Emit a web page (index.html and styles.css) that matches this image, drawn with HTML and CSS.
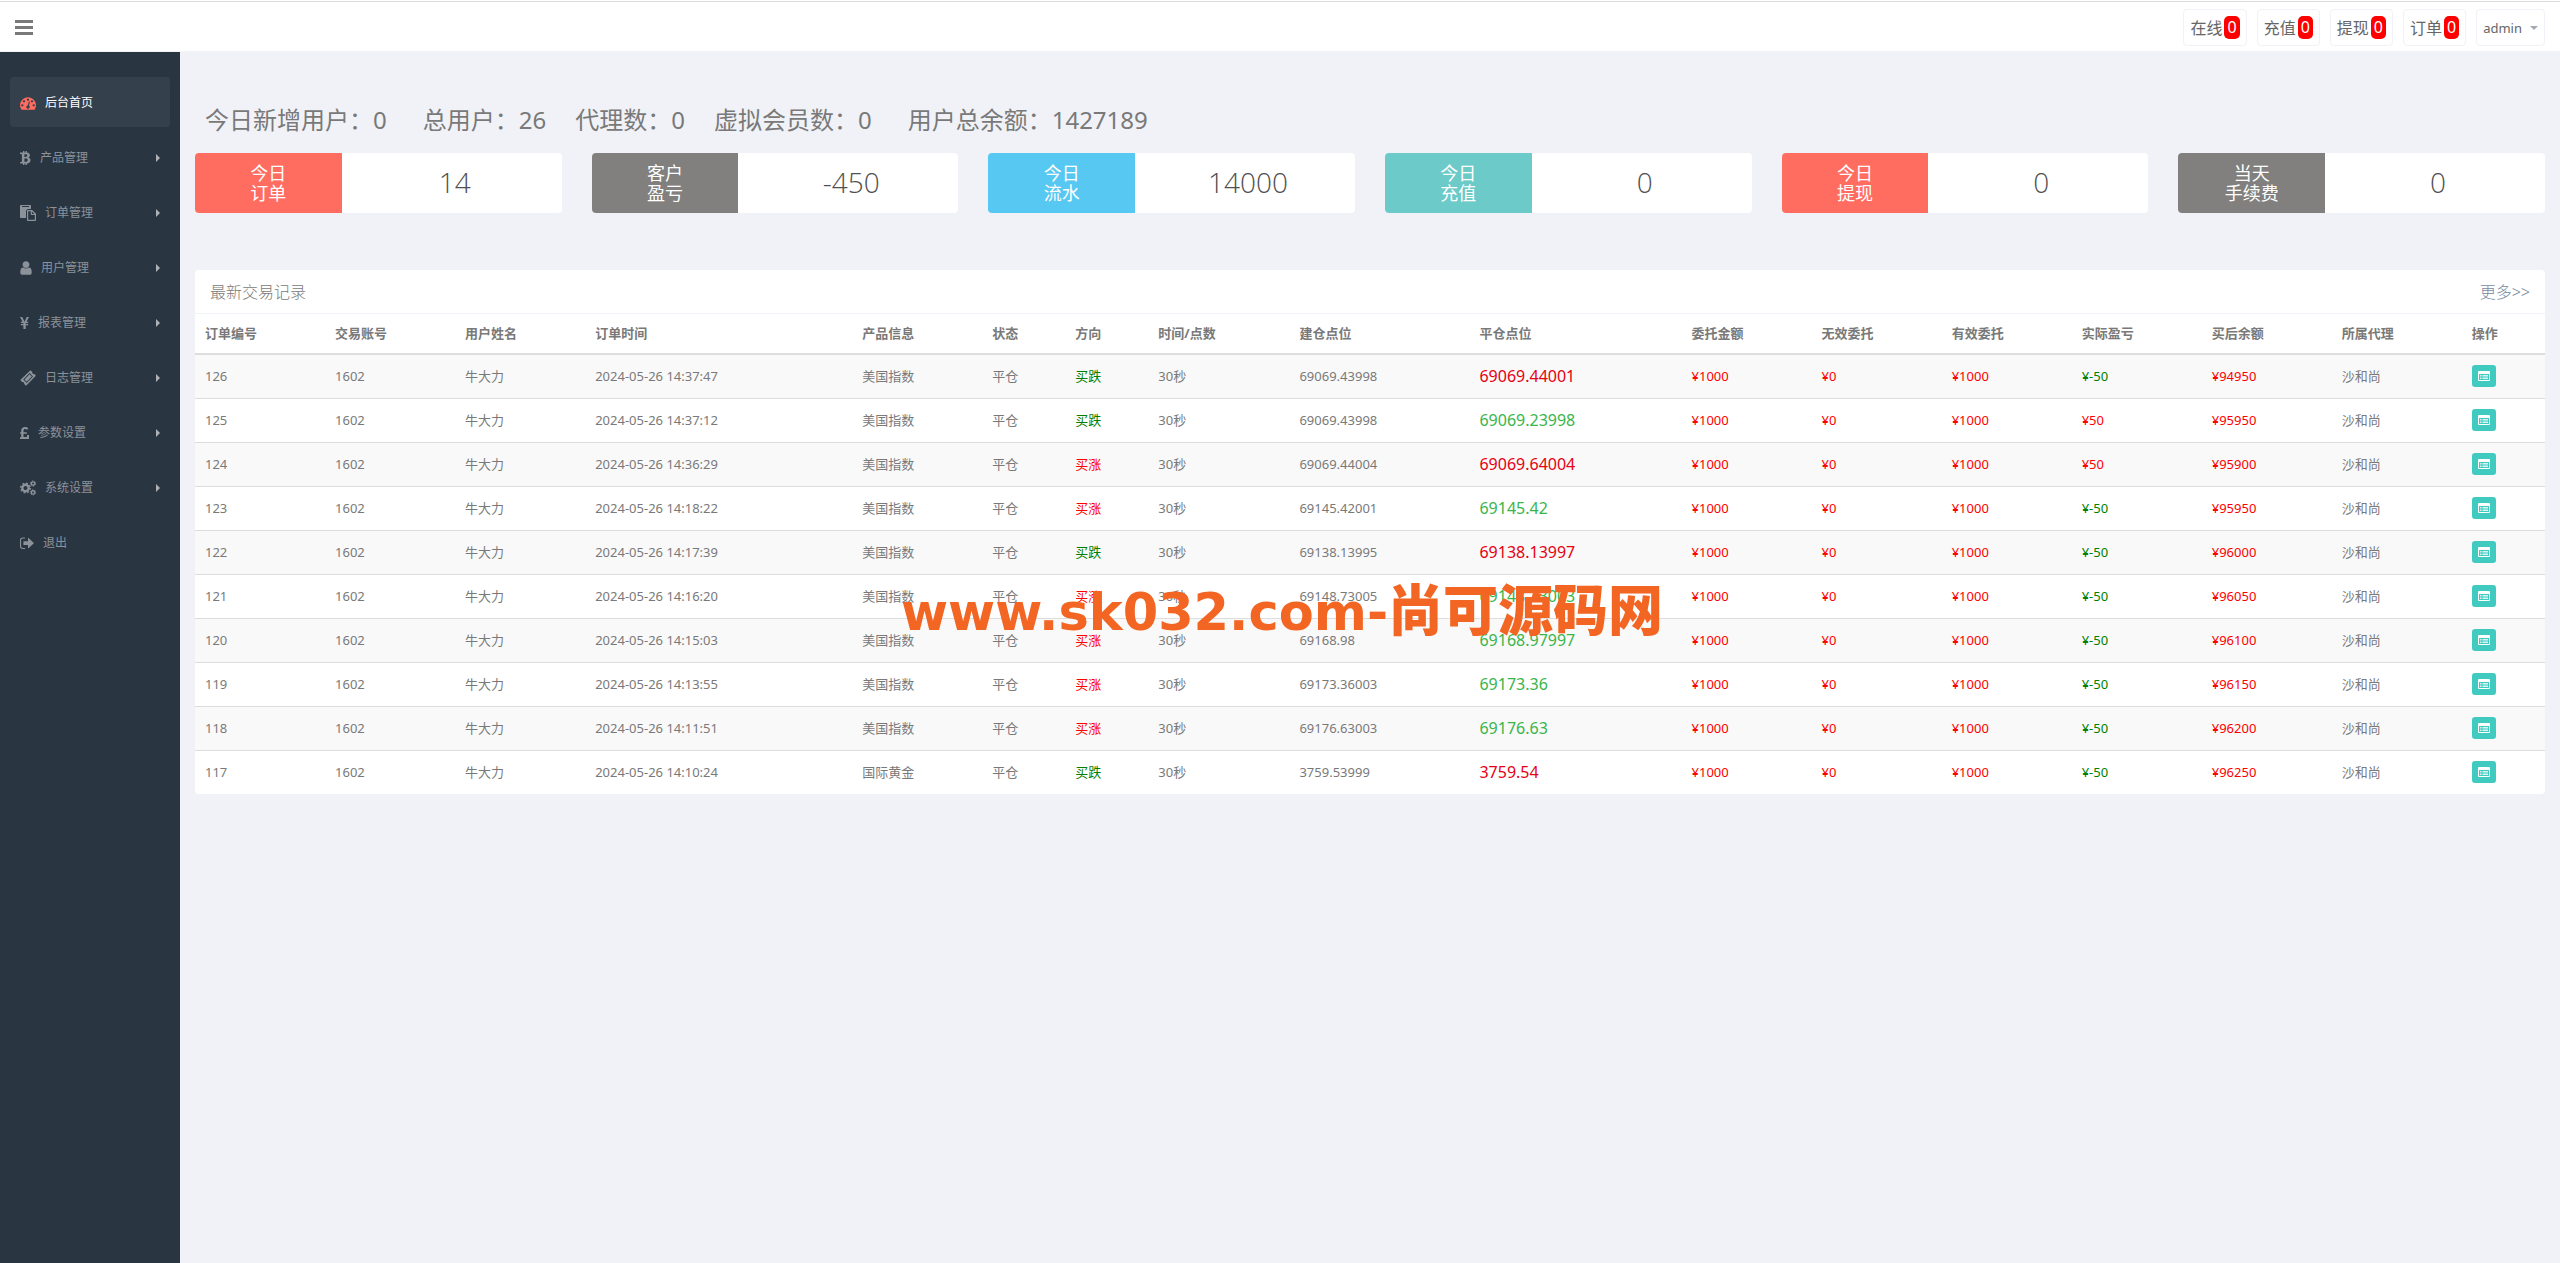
FILE: index.html
```html
<!DOCTYPE html>
<html lang="zh-CN">
<head>
<meta charset="utf-8">
<meta name="viewport" content="width=device-width, initial-scale=1">
<title>后台首页</title>
<link rel="stylesheet" href="styles.css">
</head>
<body>
<svg class="sprite" aria-hidden="true">
  <symbol id="i-list" viewBox="0 0 12 12"><path fill="currentColor" fill-rule="evenodd" d="M1 1h10a1 1 0 0 1 1 1v8a1 1 0 0 1-1 1H1a1 1 0 0 1-1-1V2a1 1 0 0 1 1-1zm0 3v6h10V4z"/><path fill="currentColor" opacity=".8" d="M2 5h1.500v1H2zM4.500 5H10v1H4.500zM2 6.500h1.500v1H2zM4.500 6.500H10v1H4.500zM2 8h1.500v1H2zM4.500 8H10v1H4.500z"/></symbol>
</svg>

<header class="topbar">
  <button class="toggle" type="button" aria-label="菜单"><span class="bar"></span><span class="bar"></span><span class="bar"></span></button>
  <nav class="top-links">
    <a class="chip" href="#">在线<span class="count">0</span></a>
    <a class="chip" href="#">充值<span class="count">0</span></a>
    <a class="chip" href="#">提现<span class="count">0</span></a>
    <a class="chip" href="#">订单<span class="count">0</span></a>
    <button class="chip account" type="button">admin<span class="caret"></span></button>
  </nav>
</header>

<div class="layout">
  <aside class="sidebar">
    <nav class="menu">
      <a class="item active" href="#"><svg class="icon" width="16" height="16" viewBox="0 0 1792 1792"><path d="M384 1152q0-53-37.500-90.500t-90.500-37.500-90.500 37.500-37.500 90.500 37.500 90.500 90.500 37.500 90.500-37.500 37.500-90.500zm192-448q0-53-37.500-90.500t-90.500-37.500-90.500 37.500-37.500 90.500 37.500 90.500 90.500 37.500 90.500-37.500 37.500-90.500zm428 481l101-382q6-26-7.500-48.500t-38.500-29.500-48 6.500-30 39.500l-101 382q-60 5-107 43.500t-63 98.500q-20 77 20 146t117 89 146-20 89-117q16-60-6-117t-72-91zm660-33q0-53-37.500-90.500t-90.500-37.500-90.500 37.500-37.500 90.500 37.500 90.500 90.500 37.500 90.500-37.500 37.500-90.500zm-640-640q0-53-37.500-90.500t-90.500-37.500-90.500 37.500-37.500 90.500 37.500 90.500 90.500 37.500 90.500-37.500 37.500-90.500zm448 192q0-53-37.500-90.500t-90.500-37.500-90.500 37.500-37.500 90.500 37.500 90.500 90.500 37.500 90.500-37.500 37.500-90.500zm320 448q0 261-141 483-19 29-54 29h-1402q-35 0-54-29-141-221-141-483 0-182 71-348t191-286 286-191 348-71 348 71 286 191 191 286 71 348z"/></svg>后台首页</a>
      <a class="item" href="#"><svg class="icon" width="11" height="16" viewBox="0 0 11 16"><path fill-rule="evenodd" d="M0 2.500h3V1h1.400v1.400h1.100V1h1.400v1.600c1.900.3 3 1.200 3 2.700 0 1-.5 1.800-1.500 2.300 1.400.4 2.100 1.300 2.100 2.600 0 2-1.300 3-3.600 3.200V15H5.500v-1.500H4.400V15H3v-1.500H0l.4-1.600h.8c.5 0 .7-.2.700-.7V4.800c0-.5-.3-.8-.8-.8H0zm4.400 1.700v2.800h.8c1.400 0 2.100-.5 2.100-1.400S6.600 4.200 5.200 4.200zm0 4.400v3.200h1c1.400 0 2.200-.5 2.200-1.600S7.600 8.600 6.200 8.600z"/></svg>产品管理<span class="arrow"></span></a>
      <a class="item" href="#"><svg class="icon" width="16" height="16" viewBox="0 0 16 16"><path fill-rule="evenodd" d="M.8 0h9.400c.5 0 .8.300.8.800V4H8.500C7 4 6 5 6 6.500V13H.8a.8.800 0 0 1-.8-.8V.8C0 .3.300 0 .8 0zM2 1v1h7V1zM7.800 5h4.400L16 8.700v6.500c0 .5-.3.800-.8.800H7.800a.8.800 0 0 1-.8-.8V5.800c0-.5.300-.8.800-.8zm.4 1.200v8.600h6.600V10h-3.300a.8.800 0 0 1-.8-.8v-3zm3.700.4v2.300h2.300z"/></svg>订单管理<span class="arrow"></span></a>
      <a class="item" href="#"><svg class="icon" width="12" height="16" viewBox="256 0 1280 1792"><path d="M1536 1399q0 109-62.500 187t-150.500 78h-854q-88 0-150.500-78t-62.500-187q0-85 8.500-160.500t31.500-152 58.500-131 94-89 134.500-34.500q131 128 313 128t313-128q76 0 134.500 34.500t94 89 58.500 131 31.500 152 8.500 160.500zm-256-887q0 159-112.500 271.500t-271.500 112.500-271.500-112.500-112.500-271.500 112.500-271.500 271.500-112.500 271.500 112.500 112.500 271.500z"/></svg>用户管理<span class="arrow"></span></a>
      <a class="item" href="#"><svg class="icon" width="9" height="16" viewBox="0 0 9 16"><path d="M0 2h2.300l1.900 4 .3 1 .4-1L6.700 2H9L6.500 6.800H8.200v1.200H5.700v1.100h2.500v1.200H5.700V14H3.400v-3.700H.9V9.100h2.500V8H.9V6.800h1.700z"/></svg>报表管理<span class="arrow"></span></a>
      <a class="item" href="#"><svg class="icon" width="16" height="16" viewBox="0 0 16 16"><path fill-rule="evenodd" d="M9.900.7a.9.900 0 0 1 1.200 0l1.200 1.200a1.700 1.700 0 0 0 2.100 2.100l1 1.100a.9.900 0 0 1 0 1.200l-8.800 9a.9.900 0 0 1-1.200 0l-1.200-1.200a1.700 1.700 0 0 0-2.100-2.100L.8 10.700a.9.900 0 0 1 0-1.200zM9.600 3 3.300 9.400l3.400 3.500 6.300-6.400zm0 1.200 2.300 2.300-5.200 5.200-2.200-2.300z"/></svg>日志管理<span class="arrow"></span></a>
      <a class="item" href="#"><svg class="icon" width="9" height="16" viewBox="0 0 9 16"><path d="M9 10v4H0v-1.800h1.200V8.800H.1V7.200h1.100V5.400C1.200 3.300 2.800 2 5 2c1.300 0 2.500.5 3.400 1.300L7.200 4.800C6.600 4.300 5.900 4 5.200 4c-1 0-1.700.6-1.700 1.500v1.700h3.300v1.600H3.500v3.300H7V10z"/></svg>参数设置<span class="arrow"></span></a>
      <a class="item" href="#"><svg class="icon" width="16" height="16" viewBox="0 0 16 16"><circle cx="5.500" cy="8" r="3.200" fill="none" stroke="currentColor" stroke-width="2.400"/><circle cx="5.500" cy="8" r="4.800" fill="none" stroke="currentColor" stroke-width="1.400" stroke-dasharray="1.880"/><circle cx="13" cy="3.600" r="1.700" fill="none" stroke="currentColor" stroke-width="1.400"/><circle cx="13" cy="3.600" r="2.600" fill="none" stroke="currentColor" stroke-width="1" stroke-dasharray="1.360"/><circle cx="13" cy="12.400" r="1.700" fill="none" stroke="currentColor" stroke-width="1.400"/><circle cx="13" cy="12.400" r="2.600" fill="none" stroke="currentColor" stroke-width="1" stroke-dasharray="1.360"/></svg>系统设置<span class="arrow"></span></a>
      <a class="item" href="#"><svg class="icon" width="14" height="16" viewBox="0 0 14 16"><path d="M5 13.500H2.700A2.200 2.200 0 0 1 .5 11.300V5.200A2.200 2.200 0 0 1 2.700 3H5" fill="none" stroke="currentColor" stroke-width="1.200"/><path d="M4 6.200h4V3.500c0-.4.400-.6.800-.3l4.800 4.500c.2.300.2.500 0 .8l-4.800 4.500c-.4.300-.8.100-.8-.3V10H4a.6.600 0 0 1-.6-.6V6.800c0-.4.200-.6.600-.6z"/></svg>退出</a>
    </nav>
  </aside>

  <main class="content">
    <p class="totals"><span class="total wide">今日新增用户：0</span><span class="total">总用户：26</span><span class="total">代理数：0</span><span class="total wide">虚拟会员数：0</span><span class="total">用户总余额：1427189</span></p>

    <section class="cards">
      <div class="card"><div class="label red">今日<br>订单</div><div class="value">14</div></div>
      <div class="card"><div class="label gray">客户<br>盈亏</div><div class="value">-450</div></div>
      <div class="card"><div class="label blue">今日<br>流水</div><div class="value">14000</div></div>
      <div class="card"><div class="label teal">今日<br>充值</div><div class="value">0</div></div>
      <div class="card"><div class="label red">今日<br>提现</div><div class="value">0</div></div>
      <div class="card"><div class="label gray">当天<br>手续费</div><div class="value">0</div></div>
    </section>

    <section class="panel">
      <div class="panel-head"><h2 class="panel-title">最新交易记录</h2><a class="more" href="#">更多&gt;&gt;</a></div>
      <table class="orders">
        <colgroup><col class="w130"><col class="w130"><col class="w130"><col class="w267"><col class="w130"><col class="w83"><col class="w83"><col class="w141"><col class="w180"><col class="w212"><col class="w130"><col class="w130"><col class="w130"><col class="w130"><col class="w130"><col class="w130"><col class="w83"></colgroup>
        <thead><tr><th>订单编号</th><th>交易账号</th><th>用户姓名</th><th>订单时间</th><th>产品信息</th><th>状态</th><th>方向</th><th>时间/点数</th><th>建仓点位</th><th>平仓点位</th><th>委托金额</th><th>无效委托</th><th>有效委托</th><th>实际盈亏</th><th>买后余额</th><th>所属代理</th><th>操作</th></tr></thead>
        <tbody>
          <tr><td>126</td><td>1602</td><td>牛大力</td><td>2024-05-26 14:37:47</td><td>美国指数</td><td>平仓</td><td class="down">买跌</td><td>30秒</td><td>69069.43998</td><td class="close rise">69069.44001</td><td class="up">¥1000</td><td class="up">¥0</td><td class="up">¥1000</td><td class="down">¥-50</td><td class="up">¥94950</td><td>沙和尚</td><td><button class="view" type="button" aria-label="查看"><svg width="12" height="12"><use href="#i-list"/></svg></button></td></tr>
          <tr><td>125</td><td>1602</td><td>牛大力</td><td>2024-05-26 14:37:12</td><td>美国指数</td><td>平仓</td><td class="down">买跌</td><td>30秒</td><td>69069.43998</td><td class="close fall">69069.23998</td><td class="up">¥1000</td><td class="up">¥0</td><td class="up">¥1000</td><td class="up">¥50</td><td class="up">¥95950</td><td>沙和尚</td><td><button class="view" type="button" aria-label="查看"><svg width="12" height="12"><use href="#i-list"/></svg></button></td></tr>
          <tr><td>124</td><td>1602</td><td>牛大力</td><td>2024-05-26 14:36:29</td><td>美国指数</td><td>平仓</td><td class="up">买涨</td><td>30秒</td><td>69069.44004</td><td class="close rise">69069.64004</td><td class="up">¥1000</td><td class="up">¥0</td><td class="up">¥1000</td><td class="up">¥50</td><td class="up">¥95900</td><td>沙和尚</td><td><button class="view" type="button" aria-label="查看"><svg width="12" height="12"><use href="#i-list"/></svg></button></td></tr>
          <tr><td>123</td><td>1602</td><td>牛大力</td><td>2024-05-26 14:18:22</td><td>美国指数</td><td>平仓</td><td class="up">买涨</td><td>30秒</td><td>69145.42001</td><td class="close fall">69145.42</td><td class="up">¥1000</td><td class="up">¥0</td><td class="up">¥1000</td><td class="down">¥-50</td><td class="up">¥95950</td><td>沙和尚</td><td><button class="view" type="button" aria-label="查看"><svg width="12" height="12"><use href="#i-list"/></svg></button></td></tr>
          <tr><td>122</td><td>1602</td><td>牛大力</td><td>2024-05-26 14:17:39</td><td>美国指数</td><td>平仓</td><td class="down">买跌</td><td>30秒</td><td>69138.13995</td><td class="close rise">69138.13997</td><td class="up">¥1000</td><td class="up">¥0</td><td class="up">¥1000</td><td class="down">¥-50</td><td class="up">¥96000</td><td>沙和尚</td><td><button class="view" type="button" aria-label="查看"><svg width="12" height="12"><use href="#i-list"/></svg></button></td></tr>
          <tr><td>121</td><td>1602</td><td>牛大力</td><td>2024-05-26 14:16:20</td><td>美国指数</td><td>平仓</td><td class="up">买涨</td><td>30秒</td><td>69148.73005</td><td class="close fall">69148.73003</td><td class="up">¥1000</td><td class="up">¥0</td><td class="up">¥1000</td><td class="down">¥-50</td><td class="up">¥96050</td><td>沙和尚</td><td><button class="view" type="button" aria-label="查看"><svg width="12" height="12"><use href="#i-list"/></svg></button></td></tr>
          <tr><td>120</td><td>1602</td><td>牛大力</td><td>2024-05-26 14:15:03</td><td>美国指数</td><td>平仓</td><td class="up">买涨</td><td>30秒</td><td>69168.98</td><td class="close fall">69168.97997</td><td class="up">¥1000</td><td class="up">¥0</td><td class="up">¥1000</td><td class="down">¥-50</td><td class="up">¥96100</td><td>沙和尚</td><td><button class="view" type="button" aria-label="查看"><svg width="12" height="12"><use href="#i-list"/></svg></button></td></tr>
          <tr><td>119</td><td>1602</td><td>牛大力</td><td>2024-05-26 14:13:55</td><td>美国指数</td><td>平仓</td><td class="up">买涨</td><td>30秒</td><td>69173.36003</td><td class="close fall">69173.36</td><td class="up">¥1000</td><td class="up">¥0</td><td class="up">¥1000</td><td class="down">¥-50</td><td class="up">¥96150</td><td>沙和尚</td><td><button class="view" type="button" aria-label="查看"><svg width="12" height="12"><use href="#i-list"/></svg></button></td></tr>
          <tr><td>118</td><td>1602</td><td>牛大力</td><td>2024-05-26 14:11:51</td><td>美国指数</td><td>平仓</td><td class="up">买涨</td><td>30秒</td><td>69176.63003</td><td class="close fall">69176.63</td><td class="up">¥1000</td><td class="up">¥0</td><td class="up">¥1000</td><td class="down">¥-50</td><td class="up">¥96200</td><td>沙和尚</td><td><button class="view" type="button" aria-label="查看"><svg width="12" height="12"><use href="#i-list"/></svg></button></td></tr>
          <tr><td>117</td><td>1602</td><td>牛大力</td><td>2024-05-26 14:10:24</td><td>国际黄金</td><td>平仓</td><td class="down">买跌</td><td>30秒</td><td>3759.53999</td><td class="close rise">3759.54</td><td class="up">¥1000</td><td class="up">¥0</td><td class="up">¥1000</td><td class="down">¥-50</td><td class="up">¥96250</td><td>沙和尚</td><td><button class="view" type="button" aria-label="查看"><svg width="12" height="12"><use href="#i-list"/></svg></button></td></tr>
        </tbody>
      </table>
    </section>
  </main>
</div>
<div class="watermark">www.sk032.com-<span class="watermark-cjk">尚可源码网</span></div>
</body>
</html>
```
FILE: styles.css
```css
* { box-sizing: border-box; }

body {
  margin: 0;
  min-height: 100vh;
  display: flex;
  flex-direction: column;
  position: relative;
  background: #f1f2f7;
  color: #797979;
  font-family: "Noto Sans", "Noto Sans CJK SC", sans-serif;
  font-size: 13px;
  line-height: 20px;
}

a { color: inherit; text-decoration: none; }
button { font: inherit; cursor: pointer; }
.sprite { position: absolute; width: 0; height: 0; }

/* top bar */
.topbar {
  display: flex;
  justify-content: space-between;
  align-items: flex-start;
  height: 52px;
  padding: 8px 15px 0;
  background: linear-gradient(#fff 1px, #ddd 1px, #ddd 2px, #fff 2px);
  border-bottom: 1px solid #f1f2f7;
}
.toggle {
  display: flex;
  flex-direction: column;
  gap: 3px;
  margin-top: 12px;
  padding: 0;
  border: 0;
  background: none;
}
.bar { width: 18px; height: 3px; background: #797979; }
.top-links { display: flex; gap: 10px; margin-top: 1px; }
.chip {
  display: flex;
  align-items: center;
  height: 37px;
  padding: 0 6px;
  border: 1px solid #f1f2f7;
  border-radius: 4px;
  background: #fff;
  color: #666;
  font-size: 16px;
}
.count {
  margin-left: 2px;
  padding: 0 3px;
  border-radius: 5px;
  background: red;
  color: #fff;
  line-height: 23px;
}
.account { font-size: 13px; }
.caret {
  margin-left: 8px;
  border: 4px solid transparent;
  border-top-color: #a4aab2;
  border-bottom: 0;
}

/* side menu */
.layout { display: flex; flex: 1; }
.sidebar { flex: none; width: 180px; padding: 25px 10px; background: #2a3542; }
.menu { display: flex; flex-direction: column; gap: 5px; }
.item {
  display: flex;
  align-items: center;
  height: 50px;
  padding: 2px 10px 0;
  border-radius: 4px;
  color: #8b929a;
  font-size: 12px;
}
.item.active { background: #35404d; color: #fff; }
.icon { flex: none; margin-right: 9px; fill: currentColor; }
.item.active .icon { color: #ff6c60; }
.arrow {
  margin-left: auto;
  border: 4px solid transparent;
  border-left-color: #aeb2b7;
  border-right: 0;
}

/* content */
.content { flex: 1; min-width: 0; padding: 52px 15px 15px; }
.totals {
  display: flex;
  margin: 0 0 17px;
  padding-left: 10px;
  font-size: 24px;
  line-height: 32px;
}
.total { margin-right: 29px; }
.total.wide { margin-right: 36px; }

.cards { display: grid; grid-template-columns: repeat(6, 1fr); gap: 30px; margin-bottom: 57px; }
.card {
  display: grid;
  grid-template-columns: 2fr 3fr;
  height: 60px;
  border-radius: 4px;
  overflow: hidden;
  background: #fff;
}
.label {
  display: flow-root;
  padding: 10px 0;
  color: #fff;
  font-size: 18px;
  line-height: 20px;
  text-align: center;
}
.red { background: #ff6c60; }
.gray { background: #81807e; }
.blue { background: #57c8f2; }
.teal { background: #6ccac9; }
.value {
  padding-left: 6px;
  color: #505050;
  font-family: "Open Sans", "Noto Sans", sans-serif;
  font-size: 28px;
  font-weight: 300;
  line-height: 58px;
  text-align: center;
}

/* orders panel */
.panel { border-radius: 4px; overflow: hidden; background: #fff; }
.panel-head {
  display: flex;
  justify-content: space-between;
  align-items: center;
  height: 44px;
  padding: 0 15px;
  border-bottom: 1px solid #eff2f7;
  font-size: 16px;
  font-weight: 300;
}
.panel-title { margin: 0; font-size: 16px; font-weight: 300; }
.more { color: #788ba0; }
.orders { width: 100%; table-layout: fixed; border-collapse: collapse; }
.orders th, .orders td { padding: 0 10px; text-align: left; white-space: nowrap; }
.orders th { height: 40px; padding-bottom: 2px; border-bottom: 2px solid #ddd; }
.orders td { height: 44px; border-top: 1px solid #ddd; }
.orders tbody tr:first-child td { border-top: 0; }
.orders tbody tr:nth-child(odd) { background: #f9f9f9; }
.orders .up { color: red; }
.orders .down { color: green; }
.orders .close { font-size: 16px; }
.rise { color: #e60012; }
.fall { color: #39b54a; }
.w83 { width: 83px; }
.w130 { width: 130px; }
.w141 { width: 141px; }
.w180 { width: 180px; }
.w212 { width: 212px; }
.w267 { width: 267px; }
.view {
  display: flex;
  align-items: center;
  justify-content: center;
  width: 24px;
  height: 22px;
  padding: 0;
  border: 0;
  border-radius: 3px;
  background: #41cac0;
  color: #fff;
}

.watermark {
  position: absolute;
  top: 577px;
  left: 0;
  right: 0;
  padding-left: 4px;
  color: #f26522;
  font: bold 51px/72px "DejaVu Sans", "Noto Sans CJK SC", sans-serif;
  text-align: center;
  white-space: nowrap;
  pointer-events: none;
}
.watermark-cjk { font-family: "Noto Sans CJK SC", sans-serif; font-size: 55px; font-weight: 900; line-height: 1; }
```
